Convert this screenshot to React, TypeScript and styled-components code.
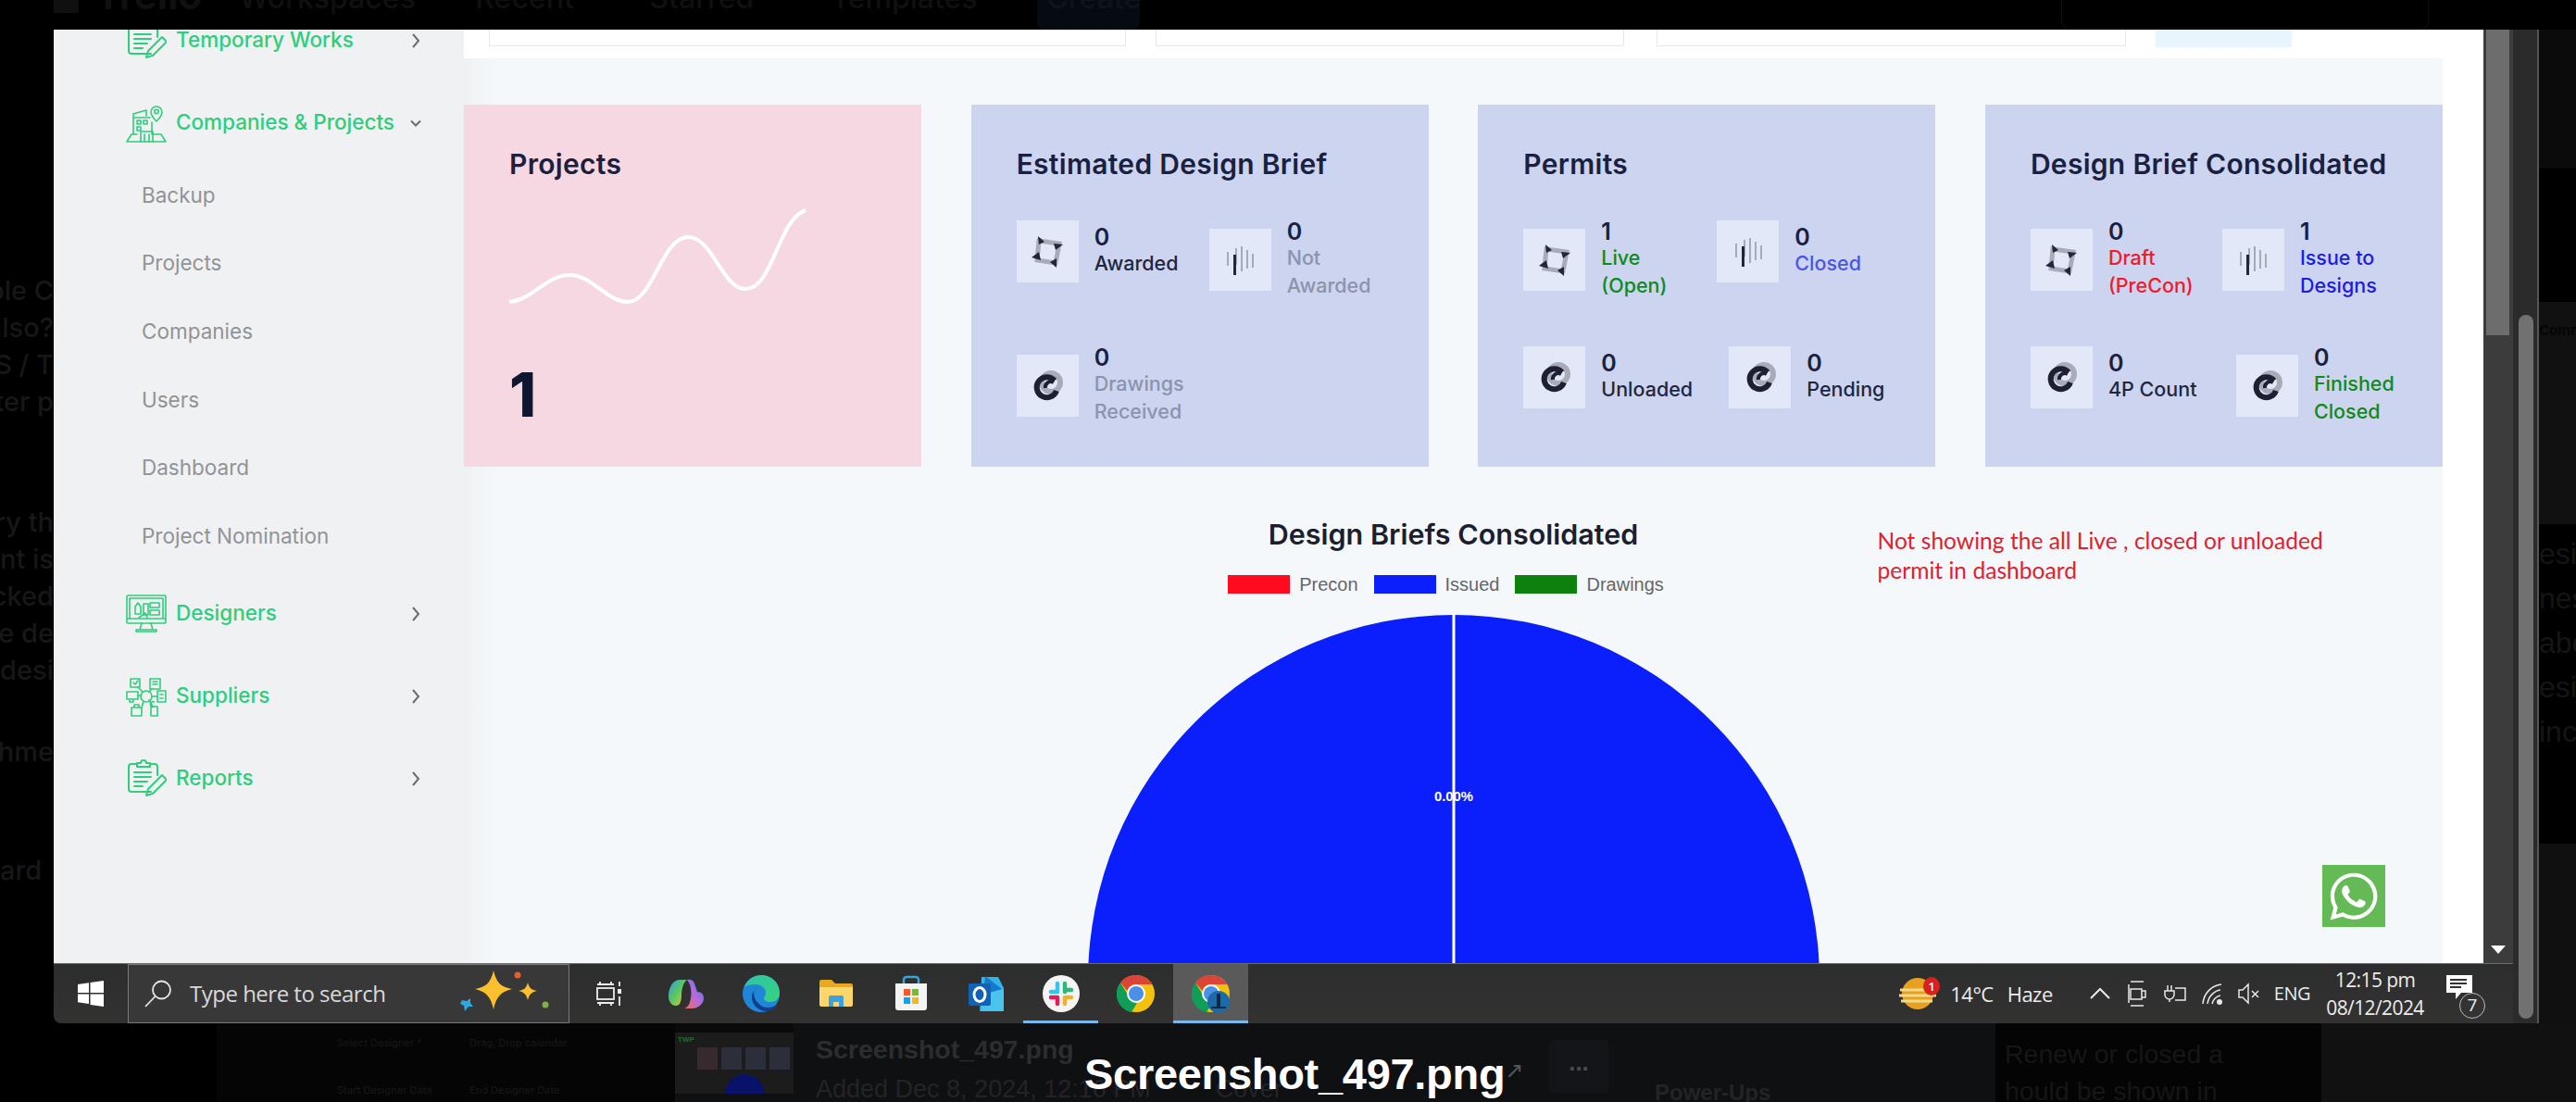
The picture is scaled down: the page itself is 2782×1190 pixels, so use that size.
import React from "react";
import styled, { createGlobalStyle } from "styled-components";
import { FaWhatsapp } from "react-icons/fa";

const Global = createGlobalStyle`
  html, body { margin: 0; padding: 0; background: #000; }
  * { box-sizing: border-box; }
  body { font-family: "Inter", "Liberation Sans", sans-serif; }
`;

const Page = styled.div`
  width: 2782px;
  height: 1190px;
  overflow: hidden;
  position: relative;
  display: grid;
  grid-template-columns: 58px 2684px 40px;
  grid-template-rows: 32px 1073px 85px;
  background: #000;
`;

/* backdrop: the dimmed page behind the lightbox */
const TopBar = styled.div`
  grid-column: 1 / 4;
  overflow: hidden;
  display: flex;
  align-items: flex-start;
  padding-left: 58px;
  color: #101010;
`;
const Logo = styled.div`
  width: 27px;
  height: 14px;
  background: #101010;
  margin-right: 18px;
`;
const Brand = styled.span`
  font: 700 42px/1 "Inter", sans-serif;
  margin: -26px 40px 0 0;
`;
const TopLink = styled.span<{ $w: number }>`
  font: 500 32px/1 "Inter", sans-serif;
  width: ${(p) => p.$w}px;
  margin-top: -18px;
  flex: none;
  white-space: nowrap;
`;
const CreateBtn = styled.div`
  width: 111px;
  height: 32px;
  background: #060b11;
  border-radius: 0 0 8px 8px;
  flex: none;
  color: #101418;
  font: 500 32px/1 "Inter", sans-serif;
  overflow: hidden;
  padding: 0 10px;
`;
const CreateLabel = styled.span`
  display: block;
  margin-top: -18px;
`;
const TopSearch = styled.div`
  width: 397px;
  height: 31px;
  margin-left: 995px;
  border: 1px solid #111;
  border-top: 0;
  border-radius: 0 0 8px 8px;
  flex: none;
`;
const LeftGutter = styled.div`
  overflow: hidden;
  padding-top: 262px;
  display: flex;
  flex-direction: column;
  align-items: flex-end;
  color: #171717;
  font: 500 29px/40px "Inter", sans-serif;
  white-space: nowrap;
`;
const GutterLine = styled.div<{ $mt?: number; $left?: boolean }>`
  margin-top: ${(p) => p.$mt ?? 0}px;
  height: 40px;
  flex: none;
  align-self: ${(p) => (p.$left ? "flex-start" : "flex-end")};
`;
const RightGutter = styled.div`
  display: flex;
  flex-direction: column;
  overflow: hidden;
  white-space: nowrap;
`;
const RightBand = styled.div<{ $h: number; $bg: string }>`
  height: ${(p) => p.$h}px;
  flex: none;
  background: ${(p) => p.$bg};
`;
const CommunityPanel = styled.div`
  height: 240px;
  flex: none;
  background: #111;
  padding-top: 20px;
  color: #050505;
  font: 700 15px/22px "Inter", sans-serif;
`;
const DimBody = styled.div`
  height: 345px;
  flex: none;
  background: #000;
  padding-top: 12px;
  display: flex;
  flex-direction: column;
  gap: 8px;
  color: #151515;
  font: 400 32px/40px "Liberation Sans", sans-serif;
`;

const Bottom = styled.div`
  grid-column: 1 / 4;
  display: grid;
  grid-template-columns: 234px 495px 128px 24px 899px 375px 352px 1fr;
  background: #0f1012;
  overflow: hidden;
`;
const BottomBlank = styled.div<{ $bg: string }>`
  background: ${(p) => p.$bg};
`;
const DimForm = styled.div`
  padding: 14px 0 0 130px;
  display: grid;
  grid-template-columns: 135px 130px;
  column-gap: 8px;
  row-gap: 22px;
  background: #050505;
  color: #161616;
  font: 500 11px/14px "Inter", sans-serif;
  white-space: nowrap;
`;
const Thumb = styled.svg`
  display: block;
  width: 128px;
  height: 82px;
`;
const DetailRow = styled.div`
  display: flex;
  align-items: flex-start;
  justify-content: space-between;
  padding-right: 43px;
`;
const DimDetails = styled.div`
  display: flex;
  flex-direction: column;
  gap: 8px;
  padding-top: 10px;
  white-space: nowrap;
`;
const DimName = styled.div`
  font: 700 28.500px/36px "Liberation Sans", sans-serif;
  color: #2c2d2f;
`;
const DimAdded = styled.div`
  font: 400 27px/34px "Liberation Sans", sans-serif;
  color: #232426;
  display: flex;
  gap: 70px;
`;
const DotsBtn = styled.div`
  width: 64px;
  height: 57px;
  margin-top: 18px;
  background: #141518;
  border-radius: 4px;
  color: #4a4b4e;
  font: 700 26px/48px "Liberation Sans", sans-serif;
  text-align: center;
`;
const PowerUps = styled.div`
  padding: 59px 0 0 7px;
  font: 700 24px/32px "Liberation Sans", sans-serif;
  color: #232426;
`;
const DimComment = styled.div`
  background: #040404;
  padding-top: 13px;
  padding-left: 10px;
  font: 400 28.500px/40px "Liberation Sans", sans-serif;
  color: #161616;
  white-space: nowrap;
`;
const Caption = styled.div`
  position: absolute;
  left: 1171px;
  top: 1134px;
  font: 700 47px/52px "Liberation Sans", sans-serif;
  letter-spacing: -0.3px;
  color: #fff;
  white-space: nowrap;
`;
const CaptionArrow = styled.span`
  font: 400 24px/1 "DejaVu Sans", sans-serif;
  color: #55565a;
  vertical-align: 12px;
`;

/* lightbox picture */
const Shot = styled.div`
  display: flex;
  min-width: 0;
  min-height: 0;
`;
const ShotBody = styled.div`
  flex: 1;
  min-width: 0;
  display: flex;
  flex-direction: column;
`;
const Screen = styled.div`
  flex: 1;
  min-height: 0;
  display: flex;
  overflow: hidden;
`;
const OuterScroll = styled.div`
  width: 28px;
  flex: none;
  background: #2b2b2b;
  border-right: 2px solid #555;
  padding: 308px 4px 5px 6px;
`;
const OuterThumb = styled.div`
  height: 100%;
  background: #717171;
  border-radius: 8px;
`;

const Sidebar = styled.aside`
  width: 443px;
  flex: none;
  background: #f0f1f2;
  overflow: hidden;
`;
const Nav = styled.nav`
  margin-top: -31px;
  display: flex;
  flex-direction: column;
  gap: 4px;
  padding: 0 45px 0 78px;
`;
const NavRow = styled.div`
  height: 85px;
  flex: none;
  display: flex;
  align-items: center;
  gap: 10px;
  color: #2fcd7c;
  font: 500 22.500px/1 "Inter", sans-serif;
`;
const NavIcon = styled.svg`
  width: 44px;
  height: 44px;
  flex: none;
  fill: none;
  stroke: #2fcd7c;
  stroke-width: 1.6;
  stroke-linejoin: round;
  stroke-linecap: round;
`;
const NavLabel = styled.span`
  flex: 1;
  white-space: nowrap;
`;
const Chevron = styled.svg`
  width: 14px;
  height: 20px;
  flex: none;
  fill: none;
  stroke: #6a6c70;
  stroke-width: 2;
`;
const SubList = styled.div`
  margin-top: -5px;
  display: flex;
  flex-direction: column;
`;
const SubItem = styled.div`
  height: 73.7px;
  padding-left: 17px;
  display: flex;
  align-items: center;
  color: #919397;
  font: 400 22.500px/1 "Inter", sans-serif;
`;

const Main = styled.main`
  flex: 1;
  min-width: 0;
  background: #fff;
  display: flex;
  flex-direction: column;
  overflow: hidden;
`;
const FilterStrip = styled.div`
  height: 31px;
  flex: none;
  display: flex;
  align-items: flex-start;
  padding-left: 27px;
`;
const FilterInput = styled.div<{ $w: number; $mr: number }>`
  width: ${(p) => p.$w}px;
  margin-right: ${(p) => p.$mr}px;
  height: 18px;
  flex: none;
  border: 1px solid #e6e7e8;
  border-top: 0;
  background: #fff;
`;
const FilterBtn = styled.div`
  width: 147px;
  height: 19px;
  background: #e9f5fd;
  flex: none;
`;
const Content = styled.div`
  flex: 1;
  min-height: 0;
  margin-right: 44px;
  padding-top: 50px;
  background: linear-gradient(90deg, #f0f1f2 0, #f4f8fb 34px);
  position: relative;
`;
const Cards = styled.div`
  display: grid;
  grid-template-columns: repeat(4, 1fr);
  column-gap: 53.5px;
`;
const Card = styled.section<{ $bg: string }>`
  height: 391px;
  padding: 44px 0 0 49px;
  background: ${(p) => p.$bg};
`;
const CardTitle = styled.h3`
  margin: 0;
  font: 600 30px/40px "Inter", sans-serif;
  letter-spacing: 0.3px;
  color: #1a2140;
  white-space: nowrap;
`;
const Spark = styled.svg`
  display: block;
  width: 325px;
  height: 110px;
  margin-top: 25px;
  overflow: visible;
`;
const BigNumber = styled.div`
  margin-top: 64px;
  font: 800 66px/60px "Inter", sans-serif;
  color: #0f1730;
`;
const StatRows = styled.div`
  margin-top: 41px;
  display: flex;
  flex-direction: column;
  gap: 51px;
`;
const StatRow = styled.div<{ $col: number }>`
  display: grid;
  grid-template-columns: ${(p) => p.$col}px auto;
  align-items: start;
`;
const Stat = styled.div`
  display: flex;
  align-items: center;
  gap: 17px;
`;
const StatIconBox = styled.div`
  width: 67px;
  height: 67px;
  flex: none;
  background: #e3e8f8;
  display: flex;
  align-items: center;
  justify-content: center;
`;
const StatText = styled.div`
  display: flex;
  flex-direction: column;
`;
const StatNum = styled.div`
  font: 600 25px/25px "Inter", sans-serif;
  color: #1a2140;
`;
const StatLabel = styled.div<{ $c: string }>`
  font: 500 21.500px/30px "Inter", sans-serif;
  color: ${(p) => p.$c};
  white-space: pre-line;
`;

const ChartRow = styled.div`
  display: grid;
  grid-template-columns: 1fr 900px 1fr;
`;
const ChartCol = styled.div`
  grid-column: 2;
  display: flex;
  flex-direction: column;
  align-items: center;
  padding-top: 53px;
`;
const ChartTitle = styled.h2`
  margin: 0;
  font: 600 30.500px/40px "Inter", sans-serif;
  color: #1c1f2e;
  white-space: nowrap;
`;
const Legend = styled.div`
  margin-top: 24px;
  margin-right: 16px;
  display: flex;
  gap: 17px;
  height: 20px;
`;
const LegendItem = styled.div`
  display: flex;
  align-items: center;
  gap: 10px;
  font: 400 20px/20px "Liberation Sans", sans-serif;
  color: #666;
`;
const Swatch = styled.span<{ $c: string }>`
  width: 67px;
  height: 20px;
  background: ${(p) => p.$c};
`;
const Pie = styled.svg`
  margin-top: 22px;
  width: 792px;
  height: 792px;
  flex: none;
`;
const Note = styled.p`
  margin: 0;
  padding: 64px 0 0 8px;
  font: 400 24.600px/32px "Lato", sans-serif;
  color: #e1202c;
  white-space: pre-line;
`;
const WhatsApp = styled.div`
  position: absolute;
  left: 2007px;
  top: 871px;
  width: 68px;
  height: 67px;
  background: #64bb55;
  color: #fff;
  display: flex;
  align-items: center;
  justify-content: center;
  font-size: 58px;
`;
const InnerScroll = styled.div`
  width: 32px;
  flex: none;
  background: #3c3c3c;
  padding: 0 4px 0 3px;
  display: flex;
  flex-direction: column;
  justify-content: space-between;
  align-items: stretch;
`;
const InnerThumb = styled.div`
  height: 330px;
  background: #6d6d6d;
`;
const ArrowDown = styled.div`
  align-self: center;
  margin-bottom: 10px;
  border-left: 8px solid transparent;
  border-right: 8px solid transparent;
  border-top: 9px solid #fff;
`;

/* windows taskbar */
const Taskbar = styled.footer`
  height: 65px;
  flex: none;
  background: linear-gradient(#2c2d2e, #333231);
  border-top: 1px solid #6b6b6b;
  border-radius: 0 0 0 8px;
  display: flex;
  align-items: stretch;
  color: #ececec;
`;
const StartBtn = styled.div`
  width: 80px;
  flex: none;
  display: flex;
  align-items: center;
  justify-content: center;
`;
const SearchBox = styled.div`
  width: 477px;
  flex: none;
  background: #383838;
  border: 1px solid #7a7a7a;
  display: flex;
  align-items: center;
  padding-left: 17px;
  gap: 19px;
`;
const SearchText = styled.span`
  font: 400 24px/1 "Open Sans", sans-serif;
  letter-spacing: -0.5px;
  color: #d9d9d9;
  white-space: nowrap;
  width: 272px;
  flex: none;
`;
const AppIcons = styled.div`
  display: flex;
  padding-left: 0;
  flex: none;
`;
const AppSlot = styled.div<{ $active?: boolean; $under?: boolean; $w?: number }>`
  width: ${(p) => p.$w ?? 81}px;
  flex: none;
  display: flex;
  align-items: center;
  justify-content: center;
  background: ${(p) => (p.$active ? "#5a5a5a" : "transparent")};
  box-shadow: ${(p) => (p.$active || p.$under ? "inset 0 -3px 0 #76b9ed" : "none")};
`;
const AppIcon = styled.svg`
  width: 42px;
  height: 42px;
  display: block;
`;
const Tray = styled.div`
  margin-left: auto;
  display: flex;
  align-items: center;
  flex: none;
  padding-right: 42px;
`;
const TrayText = styled.span<{ $ml: number; $size?: number }>`
  margin-left: ${(p) => p.$ml}px;
  font: 400 ${(p) => p.$size ?? 22}px/1 "Open Sans", sans-serif;
  letter-spacing: -0.5px;
  white-space: nowrap;
  color: #ececec;
`;
const TrayIcon = styled.svg<{ $ml: number }>`
  margin-left: ${(p) => p.$ml}px;
  width: 26px;
  height: 30px;
  flex: none;
  fill: none;
  stroke: #e8e8e8;
  stroke-width: 1.5;
`;
const Clock = styled.div`
  margin-left: 21px;
  width: 98px;
  display: flex;
  flex-direction: column;
  align-items: center;
  gap: 9px;
  font: 400 21px/21px "Open Sans", sans-serif;
  letter-spacing: -0.6px;
  color: #ececec;
`;
const Notify = styled.div`
  margin-left: 28px;
  position: relative;
  width: 30px;
  height: 42px;
  flex: none;
`;
const NotifyBadge = styled.span`
  position: absolute;
  right: -12px;
  bottom: -6px;
  width: 28px;
  height: 28px;
  border-radius: 50%;
  border: 1.5px solid #bbb;
  background: #333;
  color: #eee;
  font: 400 19px/25px "Open Sans", sans-serif;
  text-align: center;
`;
const Weather = styled.div`
  position: relative;
  width: 42px;
  height: 36px;
  flex: none;
`;
const WeatherBadge = styled.span`
  position: absolute;
  right: -2px;
  top: 0;
  width: 18px;
  height: 20px;
  border-radius: 50%;
  background: #d8201f;
  color: #fff;
  font: 600 13px/20px "Open Sans", sans-serif;
  text-align: center;
`;

/* drawings */
const ChevronRight = () => (
  <Chevron viewBox="0 0 14 20">
    <path d="M4 3l6 7-6 7" />
  </Chevron>
);
const ChevronDown = () => (
  <Chevron viewBox="0 0 14 20">
    <path d="M2 7.5l5 5 5-5" />
  </Chevron>
);
const ClipboardIcon = () => (
  <NavIcon viewBox="0 0 44 44">
    <path d="M27 36H6a3 3 0 0 1-3-3V9a3 3 0 0 1 3-3h6M26 6h5a3 3 0 0 1 3 3v9" strokeWidth="2" />
    <path d="M12 9V5h4a3 3 0 0 1 6 0h4v4z" strokeWidth="2" />
    <path d="M9 15h18M9 20h18M9 25h14M9 30h9" strokeWidth="2" />
    <path d="M22 40l2-7 15-15 5 5-15 15z" strokeWidth="2" />
  </NavIcon>
);
const BuildingIcon = () => (
  <NavIcon viewBox="0 0 44 44">
    <path d="M8 34V12l14-4v6M8 16h18" />
    <path d="M33 20c-4-4-6-7-6-10a6 6 0 0 1 12 0c0 3-2 6-6 10z" />
    <circle cx="33" cy="9.5" r="2.2" />
    <path d="M12 19h4v4h-4zM19 19h4v4h-4zM12 26h4v4h-4z" />
    <path d="M28 21v13M16 42V31h13v11M20 34v8M25 34v8" />
    <path d="M1 42l5-8h6M43 42l-5-8h-9M1 42h42" />
  </NavIcon>
);
const MonitorIcon = () => (
  <NavIcon viewBox="0 0 44 44">
    <rect x="1" y="2" width="42" height="30" rx="1" />
    <path d="M1 27h42M4 5h36v22H4zM17 32l-2 7h14l-2-7M11 41h22v-2H11z" />
    <path d="M10 22v-8l3-4 3 4v8zM19 23V11h5v12zM26 10h10v5H26zM26 18h10v5H26zM14 26l7-5 2 5" />
  </NavIcon>
);
const HubIcon = () => (
  <NavIcon viewBox="0 0 44 44">
    <circle cx="22" cy="22" r="6" />
    <path d="M5 3h10v9H5zM8 7l2 2 3-4M26 3h11v11H26zM29 6h5M29 9h5M1 17h12v8H1zM4 25v3h4v-3M34 16h9v12h-9zM37 20h3M37 24h3M6 34h11v9H6zM9 34v-3h5v3M27 33h7v10h-7zM30.500 33a2.800 2.800 0 1 1 0-5" />
    <path d="M13 12l5 5M28 14l-3 3M13 21h3M28 22h6M17 34l2-7M29 33l-4-7" />
  </NavIcon>
);
const Sq = () => (
  <svg width="34" height="34" viewBox="0 0 34 34">
    <path d="M8 5l22 3-4 21-20-3z" fill="none" stroke="#a9acb8" strokeWidth="5" />
    <path d="M7 0l7 6-6 3zM34 9l-8 6-2-7zM27 34l-7-6 7-4zM0 23l8-6 2 9z" fill="#23263a" />
  </svg>
);
const Bars = () => (
  <svg width="30" height="32" viewBox="0 0 30 32">
    <g fill="#a6aab6">
      <rect x="1" y="7" width="2" height="15" />
      <rect x="16" y="1" width="2" height="27" />
      <rect x="22" y="5" width="2" height="20" />
      <rect x="28" y="9" width="2" height="15" />
      <rect x="10" y="3" width="2" height="18" />
    </g>
    <rect x="8" y="10" width="3" height="22" fill="#23263a" />
  </svg>
);
const Rings = () => (
  <svg width="34" height="34" viewBox="0 0 34 34">
    <circle cx="21" cy="13" r="10" fill="none" stroke="#a9acb8" strokeWidth="6" />
    <path d="M25 11a11 11 0 1 0 2 11" fill="none" stroke="#1d2033" strokeWidth="6" />
    <path d="M24 13a6 6 0 0 0-9 6" fill="none" stroke="#1d2033" strokeWidth="4" />
  </svg>
);
const icons = { sq: <Sq />, bars: <Bars />, rings: <Rings /> };

const DARK = "#20263f";
const GREY = "#8d93ad";

type S = { icon: keyof typeof icons; n: string; label: string; c: string };
const StatItem = ({ s }: { s: S }) => (
  <Stat>
    <StatIconBox>{icons[s.icon]}</StatIconBox>
    <StatText>
      <StatNum>{s.n}</StatNum>
      <StatLabel $c={s.c}>{s.label}</StatLabel>
    </StatText>
  </Stat>
);

const cardData: { title: string; rows: { col: number; items: S[] }[] }[] = [
  {
    title: "Estimated Design Brief",
    rows: [
      {
        col: 208,
        items: [
          { icon: "sq", n: "0", label: "Awarded", c: DARK },
          { icon: "bars", n: "0", label: "Not\nAwarded", c: GREY },
        ],
      },
      { col: 208, items: [{ icon: "rings", n: "0", label: "Drawings\nReceived", c: GREY }] },
    ],
  },
  {
    title: "Permits",
    rows: [
      {
        col: 209,
        items: [
          { icon: "sq", n: "1", label: "Live\n(Open)", c: "#0f8a1c" },
          { icon: "bars", n: "0", label: "Closed", c: "#4a55e6" },
        ],
      },
      {
        col: 222,
        items: [
          { icon: "rings", n: "0", label: "Unloaded", c: DARK },
          { icon: "rings", n: "0", label: "Pending", c: DARK },
        ],
      },
    ],
  },
  {
    title: "Design Brief Consolidated",
    rows: [
      {
        col: 207,
        items: [
          { icon: "sq", n: "0", label: "Draft\n(PreCon)", c: "#f01a2e" },
          { icon: "bars", n: "1", label: "Issue to\nDesigns", c: "#1c1ce2" },
        ],
      },
      {
        col: 222,
        items: [
          { icon: "rings", n: "0", label: "4P Count", c: DARK },
          { icon: "rings", n: "0", label: "Finished\nClosed", c: "#118a1c" },
        ],
      },
    ],
  },
];

const WinLogo = () => (
  <svg width="28" height="28" viewBox="0 0 28 28" fill="#fff">
    <path d="M0 4l12-1.700V13H0zM13.500 2l14.500-2v13H13.500zM0 14.500h12V25L0 23.300zM13.500 14.500H28V28l-14.500-2z" />
  </svg>
);
const SearchGlass = () => (
  <svg width="30" height="30" viewBox="0 0 30 30" fill="none" stroke="#e6e6e6" strokeWidth="1.800">
    <circle cx="18.500" cy="11" r="9.500" />
    <path d="M11.500 18L1 29" />
  </svg>
);
const Sparkles = () => (
  <svg width="100" height="50" viewBox="0 0 100 50">
    <path d="M37 0c3 13 8 18 20 20-12 3-17 8-20 22-3-14-8-19-20-22 12-2 17-7 20-20z" fill="#fbc02d" />
    <path d="M74 13c1.500 6 4 8 10 9-6 1.500-8.500 4-10 10-1.500-6-4-8.500-10-10 6-1 8.500-3 10-9z" fill="#fbc02d" />
    <path d="M3 32l5 1 4-3 0 5 3 4-5 0-4 5-1-6-4-2z" fill="#2ea7e0" />
    <circle cx="63" cy="5" r="3.500" fill="#e2632a" />
    <circle cx="93" cy="37" r="3.500" fill="#7cb342" />
  </svg>
);
const TaskView = () => (
  <svg width="28" height="28" viewBox="0 0 28 28" fill="none" stroke="#eee" strokeWidth="1.800">
    <path d="M1 4h18M1 24h18M4 1v3M16 1v3M4 24v3M16 24v3" />
    <rect x="1" y="8" width="18" height="12" />
    <rect x="23" y="9" width="4" height="5" fill="#eee" stroke="none" />
    <path d="M25 1v5M25 17v10" />
  </svg>
);
const Copilot = () => (
  <AppIcon viewBox="0 0 42 42">
    <defs>
      <linearGradient id="cp1" x1="0" y1="0" x2="1" y2="1">
        <stop offset="0" stopColor="#2f9be8" />
        <stop offset="0.5" stopColor="#5cc95c" />
        <stop offset="1" stopColor="#f5c338" />
      </linearGradient>
      <linearGradient id="cp2" x1="1" y1="0" x2="0" y2="1">
        <stop offset="0" stopColor="#3a7fe6" />
        <stop offset="0.5" stopColor="#b66ae0" />
        <stop offset="1" stopColor="#f26b4d" />
      </linearGradient>
    </defs>
    <path d="M14 6h8c-4 3-6 10-6 16s-1 12-6 12c-5 0-8-5-8-10C2 14 7 6 14 6z" fill="url(#cp1)" />
    <path d="M22 6c3-1 7 0 8 4l3 9c6 0 7 4 7 7 0 6-6 11-13 11H19c5-2 6-6 7-11 1-5 1-14-4-20z" fill="url(#cp2)" />
  </AppIcon>
);
const Edge = () => (
  <AppIcon viewBox="0 0 42 42">
    <defs>
      <linearGradient id="ed1" x1="0" y1="0" x2="1" y2="1">
        <stop offset="0" stopColor="#2ec4a8" />
        <stop offset="1" stopColor="#36d27e" />
      </linearGradient>
    </defs>
    <circle cx="21" cy="21" r="20" fill="#1f86d8" />
    <path d="M3 14C6 5 14 1 21 1c11 0 20 8 20 19 0 7-5 10-10 10-4 0-7-2-7-4 0-2 2-3 2-6 0-5-5-9-11-9-6 0-10 1-12 3z" fill="url(#ed1)" />
    <path d="M13 20c0-3 3-6 7-6-5 0-9 5-9 11 0 8 7 15 16 15 6 0 9-3 11-7-3 2-6 3-10 3-8 0-15-8-15-16z" fill="#123f8a" />
  </AppIcon>
);
const Folder = () => (
  <AppIcon viewBox="0 0 42 42">
    <path d="M3 8a2 2 0 0 1 2-2h11l4 4h17a2 2 0 0 1 2 2v3H3z" fill="#e8a820" />
    <path d="M3 14h36v19a2 2 0 0 1-2 2H5a2 2 0 0 1-2-2z" fill="#fbd66b" />
    <path d="M13 35V25a2 2 0 0 1 2-2h12a2 2 0 0 1 2 2v10h-5v-5h-6v5z" fill="#3f9fe0" />
  </AppIcon>
);
const Store = () => (
  <AppIcon viewBox="0 0 42 42">
    <path d="M13 11V6a3 3 0 0 1 3-3h10a3 3 0 0 1 3 3v5" fill="none" stroke="#3aa4d8" strokeWidth="2.500" />
    <path d="M4 10h34v26a3 3 0 0 1-3 3H7a3 3 0 0 1-3-3z" fill="#f3f3f3" />
    <rect x="13" y="16" width="7" height="7" fill="#ef5a2b" />
    <rect x="22" y="16" width="7" height="7" fill="#7cb92f" />
    <rect x="13" y="25" width="7" height="7" fill="#17a0e6" />
    <rect x="22" y="25" width="7" height="7" fill="#fab716" />
  </AppIcon>
);
const Outlook = () => (
  <AppIcon viewBox="0 0 42 42">
    <path d="M16 3h18l6 12v25H14z" fill="#33b3ea" />
    <path d="M20 2l18 14-20 6z" fill="#1679c9" />
    <path d="M16 22l24-6v22a2 2 0 0 1-2 2H16z" fill="#4bc3ef" />
    <rect x="2" y="10" width="24" height="24" rx="2" fill="#0f62b5" />
    <ellipse cx="14" cy="22" rx="6" ry="7.500" fill="none" stroke="#fff" strokeWidth="3" />
  </AppIcon>
);
const Slack = () => (
  <AppIcon viewBox="0 0 42 42">
    <circle cx="21" cy="21" r="20" fill="#f4f4f4" />
    <g strokeWidth="4.500" strokeLinecap="round" fill="none">
      <path d="M17 10v9M10 19h7" stroke="#36c5f0" />
      <path d="M32 17h-7M25 10v9" stroke="#2eb67d" />
      <path d="M25 32v-7M32 25h-7" stroke="#ecb22e" />
      <path d="M10 25h7M17 25v7" stroke="#e01e5a" />
    </g>
  </AppIcon>
);
const Chrome = ({ overlay }: { overlay?: boolean }) => (
  <AppIcon viewBox="0 0 42 42">
    <circle cx="21" cy="21" r="20" fill="#f4c20d" />
    <path d="M21 1a20 20 0 0 1 17.300 10H21a10 10 0 0 0-9.500 7L4 9A20 20 0 0 1 21 1z" fill="#db4437" />
    <path d="M4 9l9 15a10 10 0 0 0 9 7l-6 10A20 20 0 0 1 4 9z" fill="#0f9d58" />
    <circle cx="21" cy="21" r="10" fill="#fff" />
    <circle cx="21" cy="21" r="8" fill="#4a8fe8" />
    {overlay && (
      <g>
        <circle cx="29" cy="30" r="12" fill="#1c6aa8" />
        <path d="M28 22h2v14h-2zM21 36h16" stroke="#0d2b45" strokeWidth="2" />
      </g>
    )}
  </AppIcon>
);

export default function App() {
  return (
    <Page>
      <Global />
      <TopBar>
        <Logo />
        <Brand>Trello</Brand>
        <TopLink $w={255}>Workspaces</TopLink>
        <TopLink $w={188}>Recent</TopLink>
        <TopLink $w={196}>Starred</TopLink>
        <TopLink $w={223}>Templates</TopLink>
        <CreateBtn>
          <CreateLabel>Create</CreateLabel>
        </CreateBtn>
        <TopSearch />
      </TopBar>

      <LeftGutter>
        <GutterLine>ole C</GutterLine>
        <GutterLine>also?</GutterLine>
        <GutterLine>/S / T</GutterLine>
        <GutterLine>ter p</GutterLine>
        <GutterLine $mt={90}>ory th</GutterLine>
        <GutterLine $left>nt is</GutterLine>
        <GutterLine>cked</GutterLine>
        <GutterLine>ne de</GutterLine>
        <GutterLine>desi</GutterLine>
        <GutterLine $mt={48}>hme</GutterLine>
        <GutterLine $mt={88} $left>
          ard
        </GutterLine>
      </LeftGutter>

      <Shot>
        <ShotBody>
          <Screen>
            <Sidebar>
              <Nav>
                <NavRow>
                  <ClipboardIcon />
                  <NavLabel>Temporary Works</NavLabel>
                  <ChevronRight />
                </NavRow>
                <NavRow>
                  <BuildingIcon />
                  <NavLabel>Companies &amp; Projects</NavLabel>
                  <ChevronDown />
                </NavRow>
                <SubList>
                  {["Backup", "Projects", "Companies", "Users", "Dashboard", "Project Nomination"].map((t) => (
                    <SubItem key={t}>{t}</SubItem>
                  ))}
                </SubList>
                <NavRow>
                  <MonitorIcon />
                  <NavLabel>Designers</NavLabel>
                  <ChevronRight />
                </NavRow>
                <NavRow>
                  <HubIcon />
                  <NavLabel>Suppliers</NavLabel>
                  <ChevronRight />
                </NavRow>
                <NavRow>
                  <ClipboardIcon />
                  <NavLabel>Reports</NavLabel>
                  <ChevronRight />
                </NavRow>
              </Nav>
            </Sidebar>
            <Main>
              <FilterStrip>
                <FilterInput $w={688} $mr={32} />
                <FilterInput $w={506} $mr={35} />
                <FilterInput $w={507} $mr={32} />
                <FilterBtn />
              </FilterStrip>
              <Content>
                <Cards>
                  <Card $bg="#f6d8e3">
                    <CardTitle>Projects</CardTitle>
                    <Spark viewBox="0 0 325 110">
                      <path
                        d="M0 104C25 102 40 75 65 75C90 75 105 104 128 104C155 104 165 34 193 34C220 34 230 90 255 90C285 90 290 15 320 5"
                        fill="none"
                        stroke="#fff"
                        strokeWidth="4"
                      />
                    </Spark>
                    <BigNumber>1</BigNumber>
                  </Card>
                  {cardData.map((c) => (
                    <Card key={c.title} $bg="#ccd4f0">
                      <CardTitle>{c.title}</CardTitle>
                      <StatRows>
                        {c.rows.map((r, i) => (
                          <StatRow key={i} $col={r.col}>
                            {r.items.map((s) => (
                              <StatItem key={s.label} s={s} />
                            ))}
                          </StatRow>
                        ))}
                      </StatRows>
                    </Card>
                  ))}
                </Cards>
                <ChartRow>
                  <ChartCol>
                    <ChartTitle>Design Briefs Consolidated</ChartTitle>
                    <Legend>
                      <LegendItem>
                        <Swatch $c="#ff0a1e" />
                        Precon
                      </LegendItem>
                      <LegendItem>
                        <Swatch $c="#0a1ffc" />
                        Issued
                      </LegendItem>
                      <LegendItem>
                        <Swatch $c="#0e800e" />
                        Drawings
                      </LegendItem>
                    </Legend>
                    <Pie viewBox="0 0 792 792">
                      <circle cx="396" cy="396" r="395" fill="#0a1ffc" />
                      <rect x="394.500" y="0" width="3" height="396" fill="#fff" />
                      <text x="396" y="202" textAnchor="middle" fill="#fff" fontFamily="Liberation Sans" fontWeight="700" fontSize="15" textLength="42" lengthAdjust="spacingAndGlyphs">
                        0.00%
                      </text>
                    </Pie>
                  </ChartCol>
                  <Note>{"Not showing the all Live , closed or unloaded\npermit in dashboard"}</Note>
                </ChartRow>
                <WhatsApp>
                  <FaWhatsapp />
                </WhatsApp>
              </Content>
            </Main>
            <InnerScroll>
              <InnerThumb />
              <ArrowDown />
            </InnerScroll>
          </Screen>
          <Taskbar>
            <StartBtn>
              <WinLogo />
            </StartBtn>
            <SearchBox>
              <SearchGlass />
              <SearchText>Type here to search</SearchText>
              <Sparkles />
            </SearchBox>
            <AppIcons>
              <AppSlot $w={85}>
                <TaskView />
              </AppSlot>
              <AppSlot $w={81}>
                <Copilot />
              </AppSlot>
              <AppSlot>
                <Edge />
              </AppSlot>
              <AppSlot>
                <Folder />
              </AppSlot>
              <AppSlot>
                <Store />
              </AppSlot>
              <AppSlot>
                <Outlook />
              </AppSlot>
              <AppSlot $under>
                <Slack />
              </AppSlot>
              <AppSlot>
                <Chrome />
              </AppSlot>
              <AppSlot $active>
                <Chrome overlay />
              </AppSlot>
            </AppIcons>
            <Tray>
              <Weather>
                <svg width="42" height="36" viewBox="0 0 42 36">
                  <circle cx="20" cy="18" r="17" fill="#e8a020" />
                  <path d="M1 14h38M0 20h40M2 26h34" stroke="#f4d98a" strokeWidth="3" />
                </svg>
                <WeatherBadge>1</WeatherBadge>
              </Weather>
              <TrayText $ml={13}>14°C</TrayText>
              <TrayText $ml={15}>Haze</TrayText>
              <TrayIcon $ml={38} viewBox="0 0 26 30">
                <path d="M3 20l10-10 10 10" strokeWidth="2" />
              </TrayIcon>
              <TrayIcon $ml={14} viewBox="0 0 26 30">
                <path d="M6 2h14M6 28h14M4 5v20M6 10h12v11H6zM18 12h4v7h-4" />
              </TrayIcon>
              <TrayIcon $ml={14} viewBox="0 0 26 30">
                <path d="M6 6v6M10 6v6M3 12h10v4a5 5 0 0 1-10 0zM8 21v3M14 9h11v13H14" />
              </TrayIcon>
              <TrayIcon $ml={16} viewBox="0 0 26 30">
                <path d="M2 26C3 14 12 6 22 5M7 26c1-8 7-14 14-15M12 26c1-4 4-8 9-9" />
                <circle cx="20" cy="24" r="3" fill="#e8e8e8" stroke="none" />
              </TrayIcon>
              <TrayIcon $ml={13} viewBox="0 0 26 30">
                <path d="M2 11h4l6-6v20l-6-6H2zM16 12l7 7M23 12l-7 7" />
              </TrayIcon>
              <TrayText $ml={14} $size={20}>
                ENG
              </TrayText>
              <Clock>
                <span>12:15 pm</span>
                <span>08/12/2024</span>
              </Clock>
              <Notify>
                <svg width="30" height="30" viewBox="0 0 30 30">
                  <path d="M0 1h28v19h-12l-6 7v-7H0z" fill="#fff" />
                  <path d="M4 6h18M4 10h18M4 14h12" stroke="#333" strokeWidth="2" />
                </svg>
                <NotifyBadge>7</NotifyBadge>
              </Notify>
            </Tray>
          </Taskbar>
        </ShotBody>
        <OuterScroll>
          <OuterThumb />
        </OuterScroll>
      </Shot>

      <RightGutter>
        <RightBand $h={150} $bg="#0b0b0b" />
        <RightBand $h={144} $bg="#000" />
        <CommunityPanel>Communi</CommunityPanel>
        <DimBody>
          <span>esign</span>
          <span>ness</span>
          <span>abo</span>
          <span>esign</span>
          <span>inct</span>
        </DimBody>
        <RightBand $h={200} $bg="#101010" />
      </RightGutter>

      <Bottom>
        <BottomBlank $bg="#000" />
        <DimForm>
          <span>Select Designer *</span>
          <span>Drag, Drop calendar</span>
          <span>Start Designer Date</span>
          <span>End Designer Date</span>
        </DimForm>
        <Thumb viewBox="0 0 128 82">
          <rect width="128" height="82" fill="#1c1c1c" />
          <rect y="0" width="128" height="10" fill="#0a0a0a" />
          <text x="3" y="20" fontSize="8" fontFamily="Liberation Sans" fontWeight="700" fill="#1f6b2f">TWP</text>
          <rect x="24" y="26" width="22" height="24" fill="#362a2e" />
          <rect x="50" y="26" width="22" height="24" fill="#2c2f3a" />
          <rect x="76" y="26" width="22" height="24" fill="#2c2f3a" />
          <rect x="102" y="26" width="22" height="24" fill="#2c2f3a" />
          <path d="M54 76a21 21 0 0 1 42 0z" fill="#091268" />
          <rect y="76" width="128" height="6" fill="#101010" />
        </Thumb>
        <div />
        <DetailRow>
          <DimDetails>
            <DimName>Screenshot_497.png</DimName>
            <DimAdded>
              <span>Added Dec 8, 2024, 12:16 PM</span>
              <span>Cover</span>
            </DimAdded>
          </DimDetails>
          <DotsBtn>...</DotsBtn>
        </DetailRow>
        <PowerUps>Power-Ups</PowerUps>
        <DimComment>
          Renew or closed a
          <br />
          hould be shown in
        </DimComment>
        <BottomBlank $bg="#111" />
      </Bottom>
      <Caption>
        Screenshot_497.png<CaptionArrow>↗</CaptionArrow>
      </Caption>
    </Page>
  );
}
